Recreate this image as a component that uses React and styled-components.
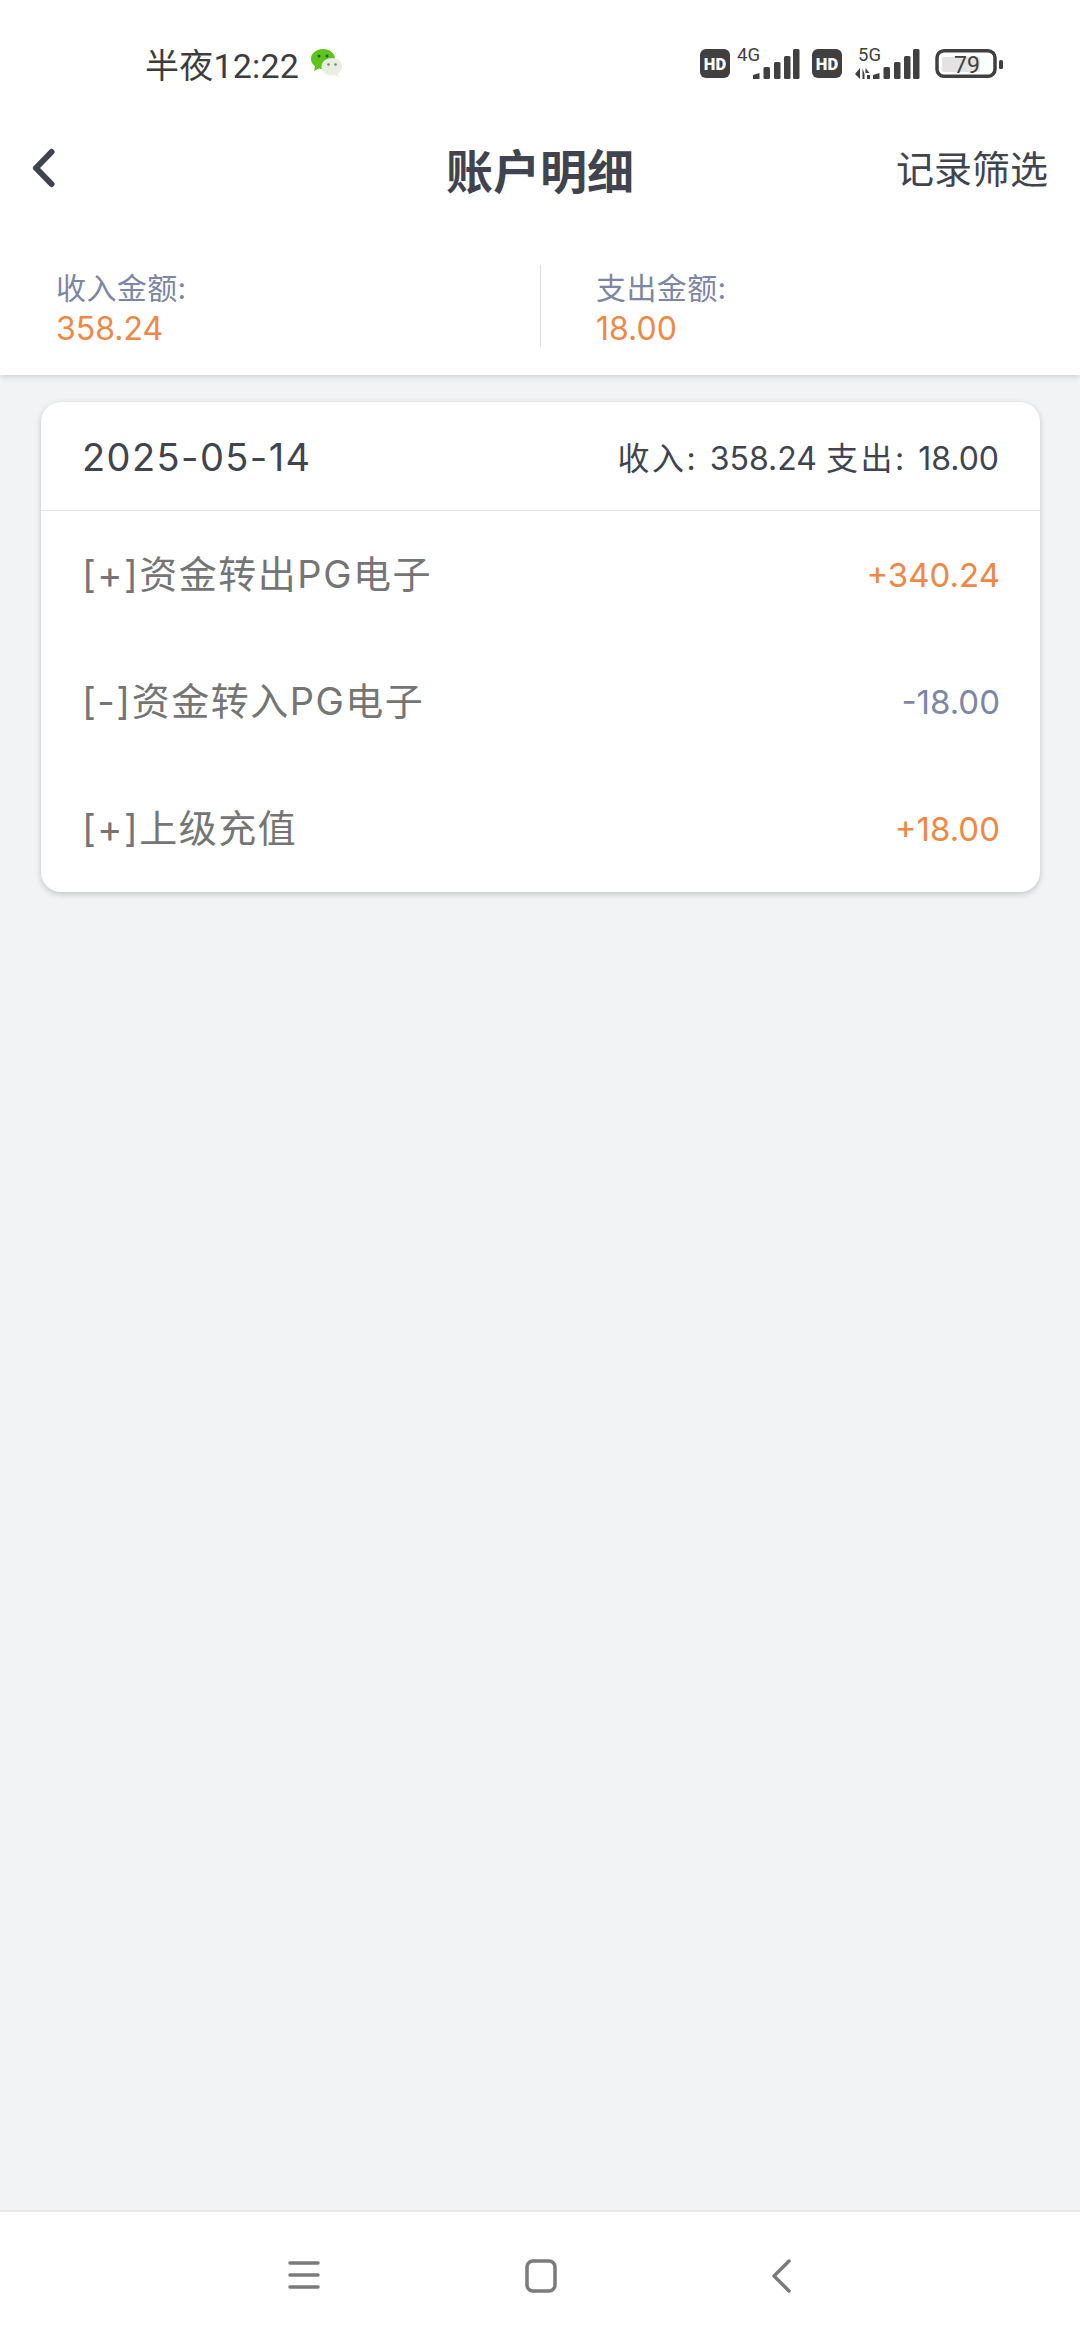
import React from "react";
import styled, { createGlobalStyle } from "styled-components";

const GlobalStyle = createGlobalStyle`
  html, body {
    margin: 0;
    padding: 0;
    background: #f2f3f5;
  }
  * {
    box-sizing: border-box;
  }
`;

const Page = styled.div`
  width: 1080px;
  height: 2340px;
  display: flex;
  flex-direction: column;
  background: #f2f3f5;
  font-family: Inter, "Noto Sans CJK SC", sans-serif;
`;

const StatusBar = styled.div`
  height: 120px;
  padding: 6px 77px 0 145px;
  display: flex;
  align-items: center;
  justify-content: space-between;
  background: #fff;
`;

const StatusLeft = styled.div`
  display: flex;
  align-items: center;
  gap: 11px;
`;

const Clock = styled.span`
  font-family: Roboto, "Noto Sans CJK SC", sans-serif;
  font-size: 34px;
  letter-spacing: 0.2px;
  color: #3d3d3f;
`;

const StatusRight = styled.div`
  display: flex;
  align-items: center;
`;

const StatusIcon = styled.svg`
  display: block;
  flex: none;
  margin-left: ${(p) => p.$gap || 0}px;
`;

const NavBar = styled.div`
  height: 100px;
  padding: 0 32px 4px 30px;
  display: flex;
  align-items: center;
  justify-content: space-between;
  position: relative;
  z-index: 1;
  background: #fff;
`;

const Title = styled.div`
  position: absolute;
  left: 0;
  right: 0;
  text-align: center;
  font-size: 47px;
  font-weight: 700;
  color: #41444f;
`;

const NavAction = styled.div`
  font-size: 38px;
  padding-bottom: 4px;
  color: #41444f;
`;

const Summary = styled.div`
  height: 155px;
  padding-top: 45px;
  display: flex;
  align-items: flex-start;
  background: #fff;
  box-shadow: 0 2px 6px rgba(0, 0, 0, 0.14);
  position: relative;
`;

const SummaryCol = styled.div`
  flex: 0 0 50%;
  height: 82px;
  padding-left: ${(p) => p.$pad}px;
  padding-top: 1px;
  display: flex;
  flex-direction: column;
  border-left: ${(p) => (p.$divider ? "1px solid #dfe0e4" : "none")};
`;

const SummaryLabel = styled.div`
  font-size: 30px;
  line-height: 44px;
  letter-spacing: 0.4px;
  color: #7d86a5;
`;

const SummaryValue = styled.div`
  font-size: 32px;
  line-height: 38px;
  color: #ee8845;
`;

const Card = styled.div`
  margin: 27px 40px 0 41px;
  background: #fff;
  border-radius: 20px;
  box-shadow: 0 2px 6px rgba(0, 0, 0, 0.2);
`;

const CardHeader = styled.div`
  height: 109px;
  padding: 0 41px;
  display: flex;
  align-items: center;
  justify-content: space-between;
  border-bottom: 1px solid #e6e6e8;
`;

const DateText = styled.div`
  font-size: 38px;
  letter-spacing: 1.4px;
  padding-top: 1px;
  color: #41444f;
`;

const Totals = styled.div`
  font-size: 32px;
  color: #41444f;
`;

const TotalLabel = styled.span`
  letter-spacing: 2.5px;
`;

const Row = styled.div`
  height: 127px;
  padding: 0 40px 0 41px;
  display: flex;
  align-items: center;
  justify-content: space-between;
`;

const RowName = styled.div`
  font-size: 38px;
  letter-spacing: 1.5px;
  padding-bottom: 6px;
  color: #757575;
`;

const RowAmount = styled.div`
  font-size: 33px;
  color: ${(p) => (p.$minus ? "#7d86a5" : "#ee8845")};
`;

const Spacer = styled.div`
  flex: 1;
`;

const BottomBar = styled.div`
  height: 130px;
  display: flex;
  align-items: flex-start;
  background: #fff;
  border-top: 2px solid #e8e8ea;
  padding: 47px 0 0 288px;
  gap: 204px;
`;

const rows = [
  { name: "[+]资金转出PG电子", amount: "+340.24" },
  { name: "[-]资金转入PG电子", amount: "-18.00", minus: true },
  { name: "[+]上级充值", amount: "+18.00" },
];

function WeChat() {
  return (
    <svg width="33" height="30" viewBox="0 0 33 30">
      <path d="M13 1C6 1 1 5.500 1 11c0 3 1.500 5.500 4 7.300L4 23l5-2.600c1.300.4 2.700.6 4 .6 7 0 12-4.500 12-10S20 1 13 1z" fill="#5fc31f" />
      <circle cx="9" cy="8" r="1.500" fill="#2c5c10" />
      <circle cx="17" cy="8" r="1.500" fill="#2c5c10" />
      <path d="M22 10c-6 0-10.500 3.800-10.500 8.700S16 27.300 22 27.300c1 0 2-.1 3-.4l3.500 2-.6-3.500c2.500-1.600 4.100-4 4.100-6.700C32 13.800 28 10 22 10z" fill="#e8eee2" />
      <circle cx="18.500" cy="16.500" r="1.300" fill="#77806f" />
      <circle cx="25.500" cy="16.500" r="1.300" fill="#77806f" />
    </svg>
  );
}

function Hd({ gap }) {
  return (
    <StatusIcon $gap={gap} width="30" height="32" viewBox="0 0 30 32">
      <rect x="0" y="2" width="30" height="29" rx="6" fill="#404040" />
      <text x="15" y="22.500" textAnchor="middle" fontSize="16.500" fontWeight="900" fontFamily="Roboto, sans-serif" fill="#fff">
        HD
      </text>
    </StatusIcon>
  );
}

// bar tops and widths follow the reference's own coordinates, x is relative to the first bar
const signalBars = [
  { x: 0, top: 26, w: 6.500 },
  { x: 10.500, top: 20, w: 6.500 },
  { x: 21, top: 15, w: 6.500 },
  { x: 31, top: 9, w: 6.500 },
  { x: 40, top: 2, w: 6.500 },
];

function Signal({ label, gap, arrows }) {
  const width = arrows ? 67 : 64;
  const left = arrows ? 19 : 16;
  const textX = arrows ? 4 : 0;
  return (
    <StatusIcon $gap={gap} width={width} height="44" viewBox={`0 -6 ${width} 44`}>
      <text x={textX} y="13.500" fontSize="18.500" fontFamily="Roboto, sans-serif" fill="#404040">
        {label}
      </text>
      {arrows && (
        <path d="M6 21v11l-5-5zM8.500 21v11h2v-5zM11.500 21l4 5h-4zM13 28h3v4h-3z" fill="#404040" />
      )}
      {signalBars.map((bar, i) => (
        <path
          key={bar.x}
          d={
            i === 0
              ? `M${left + bar.x} ${bar.top + 2}l${bar.w} -2v6h-${bar.w}z`
              : `M${left + bar.x} ${bar.top + 1.500}q0-1.500 1.500-1.500h${bar.w - 3}q1.500 0 1.500 1.500V30.500q0 1.500-1.500 1.500h-${bar.w - 3}q-1.500 0-1.500-1.500z`
          }
          fill="#404040"
        />
      ))}
    </StatusIcon>
  );
}

function Battery({ gap }) {
  return (
    <StatusIcon $gap={gap} width="68" height="32" viewBox="0 0 68 32">
      <rect x="2" y="3.750" width="58" height="25.500" rx="7" fill="none" stroke="#404040" strokeWidth="3.500" />
      <rect x="7" y="10" width="38" height="15" rx="2" fill="#e3e3e3" />
      <text x="32" y="25.500" textAnchor="middle" fontSize="23" fontFamily="Roboto, sans-serif" fill="#404040">
        79
      </text>
      <rect x="64" y="13" width="4" height="9" rx="1.500" fill="#404040" />
    </StatusIcon>
  );
}

function BackArrow() {
  return (
    <svg width="30" height="44" viewBox="0 0 30 44">
      <path d="M21.500 6 6 22l15.500 16" fill="none" stroke="#41444f" strokeWidth="6" strokeLinecap="round" strokeLinejoin="round" />
    </svg>
  );
}

function MenuIcon() {
  return (
    <svg width="32" height="32" viewBox="0 0 32 32">
      <path d="M2 4h28M2 16h28M2 28h28" stroke="#7b7b7b" strokeWidth="3.500" strokeLinecap="round" />
    </svg>
  );
}

function HomeIcon() {
  return (
    <svg width="34" height="34" viewBox="0 0 34 34">
      <rect x="3" y="2" width="28" height="30" rx="6" fill="none" stroke="#7b7b7b" strokeWidth="3.500" />
    </svg>
  );
}

function BackNavIcon() {
  return (
    <svg width="30" height="34" viewBox="0 0 30 34">
      <path d="M27 2 12 17l15 15" fill="none" stroke="#7b7b7b" strokeWidth="3.500" strokeLinecap="round" strokeLinejoin="round" />
    </svg>
  );
}

export default function App() {
  return (
    <Page>
      <GlobalStyle />
      <StatusBar>
        <StatusLeft>
          <Clock>半夜12:22</Clock>
          <WeChat />
        </StatusLeft>
        <StatusRight>
          <Hd />
          <Signal label="4G" gap={7} />
          <Hd gap={11} />
          <Signal label="5G" gap={12} arrows />
          <Battery gap={14} />
        </StatusRight>
      </StatusBar>
      <NavBar>
        <BackArrow />
        <Title>账户明细</Title>
        <NavAction>记录筛选</NavAction>
      </NavBar>
      <Summary>
        <SummaryCol $pad={56}>
          <SummaryLabel>收入金额:</SummaryLabel>
          <SummaryValue>358.24</SummaryValue>
        </SummaryCol>
        <SummaryCol $pad={55} $divider>
          <SummaryLabel>支出金额:</SummaryLabel>
          <SummaryValue>18.00</SummaryValue>
        </SummaryCol>
      </Summary>
      <Card>
        <CardHeader>
          <DateText>2025-05-14</DateText>
          <Totals>
            <TotalLabel>收入: </TotalLabel>358.24 <TotalLabel>支出: </TotalLabel>18.00
          </Totals>
        </CardHeader>
        {rows.map((row) => (
          <Row key={row.name}>
            <RowName>{row.name}</RowName>
            <RowAmount $minus={row.minus}>{row.amount}</RowAmount>
          </Row>
        ))}
      </Card>
      <Spacer />
      <BottomBar>
        <MenuIcon />
        <HomeIcon />
        <BackNavIcon />
      </BottomBar>
    </Page>
  );
}
